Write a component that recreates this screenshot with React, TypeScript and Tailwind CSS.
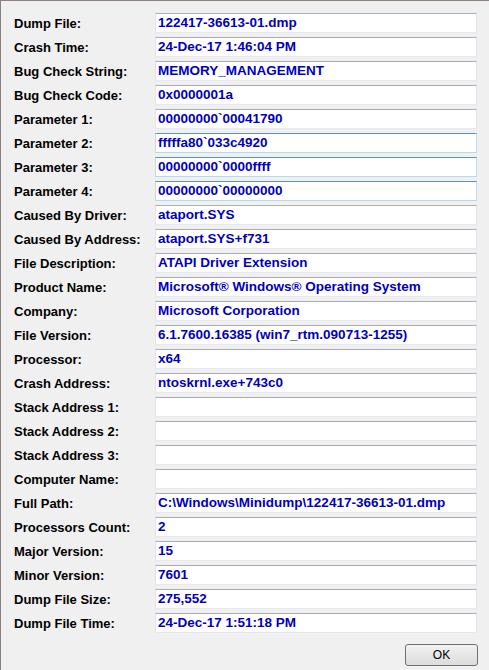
const rows: [string, string, boolean?][] = [
  ['Dump File:', '122417-36613-01.dmp'],
  ['Crash Time:', '24-Dec-17 1:46:04 PM'],
  ['Bug Check String:', 'MEMORY_MANAGEMENT'],
  ['Bug Check Code:', '0x0000001a'],
  ['Parameter 1:', '00000000`00041790'],
  ['Parameter 2:', 'fffffa80`033c4920', true],
  ['Parameter 3:', '00000000`0000ffff', true],
  ['Parameter 4:', '00000000`00000000', true],
  ['Caused By Driver:', 'ataport.SYS'],
  ['Caused By Address:', 'ataport.SYS+f731'],
  ['File Description:', 'ATAPI Driver Extension'],
  ['Product Name:', 'Microsoft® Windows® Operating System'],
  ['Company:', 'Microsoft Corporation'],
  ['File Version:', '6.1.7600.16385 (win7_rtm.090713-1255)'],
  ['Processor:', 'x64'],
  ['Crash Address:', 'ntoskrnl.exe+743c0'],
  ['Stack Address 1:', ''],
  ['Stack Address 2:', ''],
  ['Stack Address 3:', ''],
  ['Computer Name:', ''],
  ['Full Path:', 'C:\\Windows\\Minidump\\122417-36613-01.dmp'],
  ['Processors Count:', '2'],
  ['Major Version:', '15'],
  ['Minor Version:', '7601'],
  ['Dump File Size:', '275,552'],
  ['Dump File Time:', '24-Dec-17 1:51:18 PM'],
]

function Field({ value, hot }: { value: string; hot?: boolean }) {
  const border = hot
    ? 'border-t-[#5794bf] border-x-[#c5daed] border-b-[#b7d9ed]'
    : 'border-t-[#abadb3] border-x-[#e2e3ea] border-b-[#e3e9ef]'
  return (
    <div className={`w-[322px] h-[20px] bg-white border ${border} flex items-center pl-[2px] overflow-hidden`}>
      <span className="text-[#0000c0] font-bold text-[13.5px] whitespace-nowrap leading-none">{value}</span>
    </div>
  )
}

export default function App() {
  return (
    <div
      className="w-[489px] h-[670px] bg-[#f0f0f0] border-l border-t border-[#8c7f7c] flex flex-col"
      style={{ fontFamily: '"Liberation Sans", Arial, sans-serif' }}
    >
      <div className="flex flex-col gap-[4px] pt-[12px] pl-[13px]">
        {rows.map(([label, value, hot]) => (
          <div key={label} className="flex items-center h-[20px]">
            <div className="w-[141px] text-[13px] font-bold text-black leading-none">{label}</div>
            <Field value={value} hot={hot} />
          </div>
        ))}
      </div>
      <div className="flex justify-end pr-[11px] pt-[11px]">
        <button className="w-[73px] h-[22px] rounded-[3px] border border-[#707070] bg-gradient-to-b from-[#f2f2f2] to-[#dcdcdc] text-[12px] text-black leading-none">
          OK
        </button>
      </div>
    </div>
  )
}
